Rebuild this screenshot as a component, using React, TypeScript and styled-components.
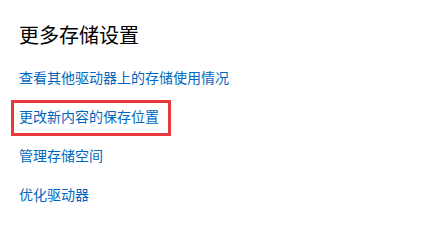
import styled, { createGlobalStyle } from 'styled-components';

const GlobalStyle = createGlobalStyle`
  body {
    margin: 0;
    background: #ffffff;
    font-family: "Noto Sans CJK SC", "Noto Sans", sans-serif;
  }
`;

const links = [
  { label: '查看其他驱动器上的存储使用情况', highlighted: false },
  { label: '更改新内容的保存位置', highlighted: true },
  { label: '管理存储空间', highlighted: false },
  { label: '优化驱动器', highlighted: false },
];

const App = () => {
  return (
    <>
      <GlobalStyle />
      <Page>
        <Heading>更多存储设置</Heading>
        <LinkList>
          {links.map((item) => (
            <LinkItem key={item.label} $highlighted={item.highlighted}>
              {item.label}
            </LinkItem>
          ))}
        </LinkList>
      </Page>
    </>
  );
};

export default App;

const Page = styled.div`
  width: 428px;
  height: 242px;
  box-sizing: border-box;
  padding: 21px 0 0 11px;
  display: flex;
  flex-direction: column;
  gap: 12px;
`;

const Heading = styled.h2`
  margin: 0 0 0 8px;
  font-size: 20px;
  line-height: 28px;
  font-weight: 400;
  color: #000000;
`;

const LinkList = styled.div`
  display: flex;
  flex-direction: column;
  align-items: flex-start;
  gap: 3px;
`;

const LinkItem = styled.a<{ $highlighted: boolean }>`
  display: block;
  padding: 2px 9px 6px 5px;
  border: 3px solid ${(p) => (p.$highlighted ? '#e8393c' : 'transparent')};
  font-size: 14px;
  line-height: 22px;
  color: #0067c0;
  cursor: pointer;
`;
